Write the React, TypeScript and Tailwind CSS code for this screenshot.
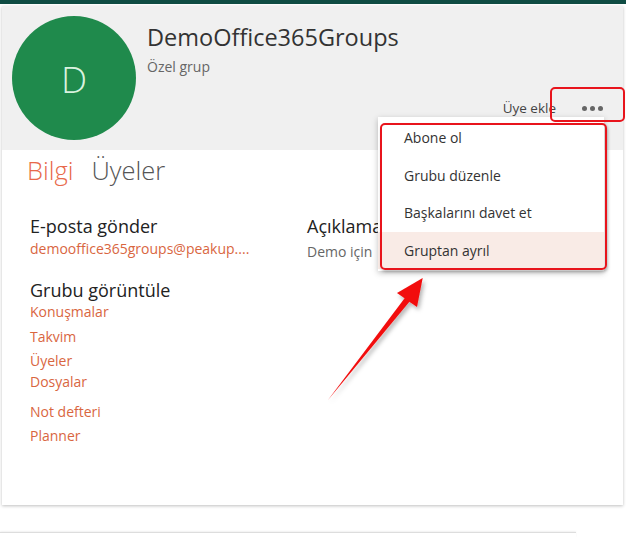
import React from "react";

const viewLinks = [
  { label: "Konuşmalar", mt: "mt-[0px]" },
  { label: "Takvim", mt: "mt-[4.5px]" },
  { label: "Üyeler", mt: "mt-[4.5px]" },
  { label: "Dosyalar", mt: "mt-[0.5px]" },
  { label: "Not defteri", mt: "mt-[10px]" },
  { label: "Planner", mt: "mt-[4px]" },
];

const menuItems = ["Abone ol", "Grubu düzenle", "Başkalarını davet et", "Gruptan ayrıl"];

export default function App() {
  return (
    <div className="relative h-[537px] w-[626px] overflow-hidden bg-white font-['Open_Sans','Noto_Sans',sans-serif] text-[#333]">
      {/* top suite bar edge */}
      <div className="h-[4px] bg-[#0f4c43]" />

      {/* group card */}
      <div className="mx-[2px] mt-[2px] h-[499px] w-[621px] bg-white shadow-[0_1px_3px_rgba(0,0,0,0.25)]">
        {/* header */}
        <div className="flex h-[144px] bg-[#f0f0f0] pl-[10px] pt-[10px]">
          <div className="flex h-[124px] w-[124px] shrink-0 items-center justify-center rounded-full bg-[#1f8a4c]">
            <span className="text-[37px] font-light leading-none text-[#d9f2df]">D</span>
          </div>
          <div className="ml-[11px] flex flex-1 flex-col pr-[20px]">
            <div className="mt-[5px] text-[23.5px] leading-[32px] text-[#333]">DemoOffice365Groups</div>
            <div className="mt-[5px] text-[14px] leading-[18px] text-[#666]">Özel grup</div>
            <div className="mt-[23px] flex items-center justify-end">
              <span className="text-[13.5px] leading-[18px] text-[#444]">Üye ekle</span>
              <span className="ml-[26px] flex gap-[3px]">
                <span className="h-[5px] w-[5px] rounded-full bg-[#666]" />
                <span className="h-[5px] w-[5px] rounded-full bg-[#666]" />
                <span className="h-[5px] w-[5px] rounded-full bg-[#666]" />
              </span>
            </div>
          </div>
        </div>

        {/* tabs */}
        <div className="mt-[3px] flex gap-[18px] pl-[25px] text-[25.5px] font-light leading-[34px]">
          <span className="text-[#e8694a]">Bilgi</span>
          <span className="text-[#555]">Üyeler</span>
        </div>

        {/* details */}
        <div className="mt-[27px] flex pl-[28px]">
          <div className="w-[277px]">
            <div className="text-[18px] leading-[24px] text-[#222]">E-posta gönder</div>
            <div className="mt-[2px] text-[14px] leading-[18px] text-[#d9663f]">demooffice365groups@peakup....</div>

            <div className="mt-[20px] text-[18px] leading-[24px] text-[#222]">Grubu görüntüle</div>
            <div className="flex flex-col text-[14px] leading-[20px] text-[#d9663f]">
              {viewLinks.map((l) => (
                <span key={l.label} className={l.mt}>
                  {l.label}
                </span>
              ))}
            </div>
          </div>
          <div>
            <div className="text-[18px] leading-[24px] text-[#222]">Açıklama</div>
            <div className="mt-[5px] text-[14px] leading-[18px] text-[#666]">Demo için</div>
          </div>
        </div>
      </div>

      {/* next card edge */}
      <div className="mt-[27px] h-[6px] w-[576px] border-t border-[#ddd] shadow-[0_-1px_2px_rgba(0,0,0,0.06)]" />

      {/* overflow menu */}
      <div className="absolute left-[378px] top-[117px] w-[226px] bg-white py-[2px] shadow-[0_2px_6px_rgba(0,0,0,0.25)]">
        {menuItems.map((m, i) => (
          <div
            key={m}
            className={`flex h-[37.5px] items-center pl-[26px] text-[14px] text-[#333] ${
              i === 3 ? "bg-[#f9ebe6]" : ""
            }`}
          >
            {m}
          </div>
        ))}
      </div>

      {/* annotation boxes */}
      <div className="absolute left-[550px] top-[87px] h-[35px] w-[75px] rounded-[5px] border-2 border-[#e8141c]" />
      <div className="absolute left-[380px] top-[123px] h-[147px] w-[227px] rounded-[5px] border-2 border-[#e8141c] shadow-[1px_2px_3px_rgba(0,0,0,0.25)]" />

      {/* annotation arrow */}
      <svg className="absolute left-0 top-0" width="626" height="537" viewBox="0 0 626 537">
        <defs>
          <filter id="sh" x="-20%" y="-20%" width="140%" height="140%">
            <feDropShadow dx="2" dy="3" stdDeviation="2" floodColor="#000" floodOpacity="0.3" />
          </filter>
        </defs>
        <polygon
          points="328,400 404.6,298.2 397,293 422.7,278 417,307 409.4,301.8"
          fill="#f20d0d"
          filter="url(#sh)"
        />
      </svg>
    </div>
  );
}
